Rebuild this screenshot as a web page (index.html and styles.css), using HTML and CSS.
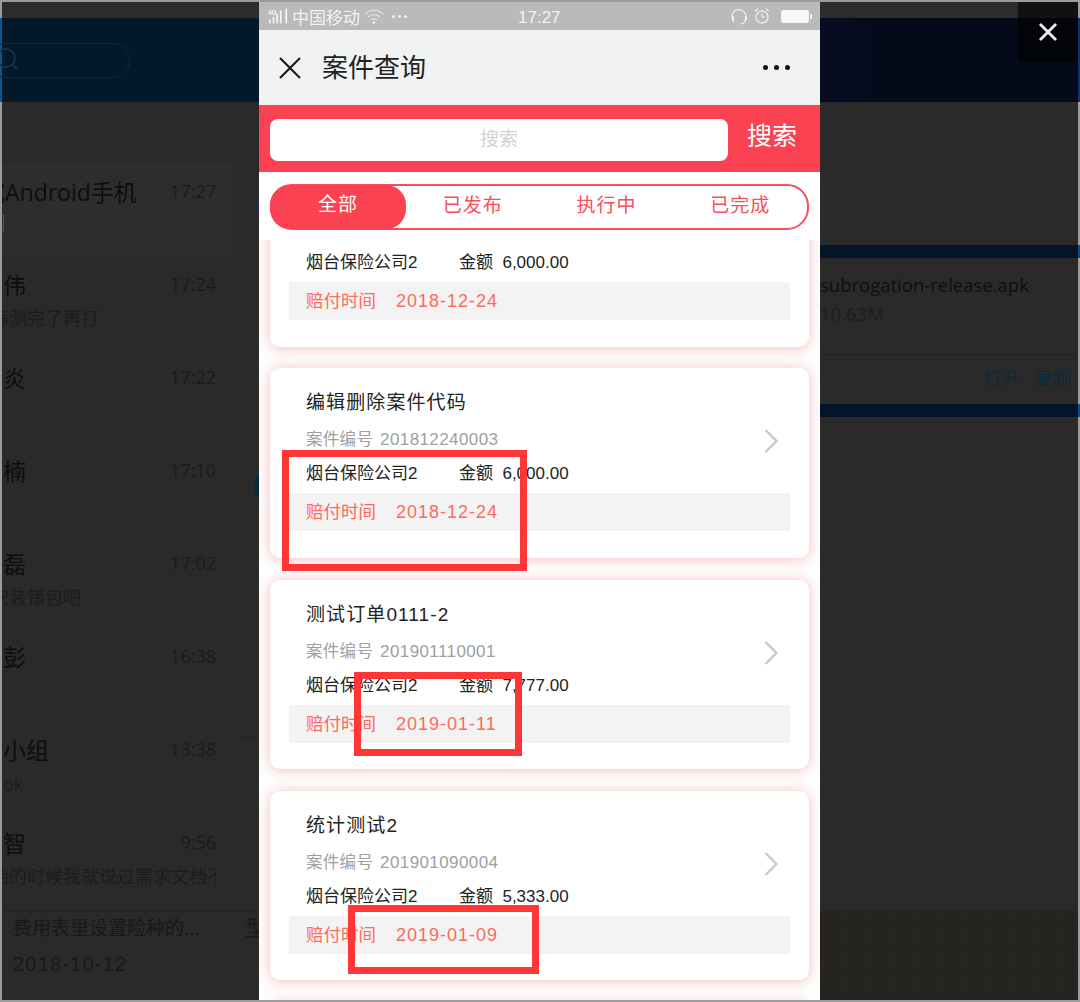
FILE: index.html
```html
<!DOCTYPE html>
<html lang="zh-CN">
<head>
    <meta charset="UTF-8">
    <meta name="viewport" content="width=device-width, initial-scale=1.0">
    <title>案件查询</title>
    <link rel="stylesheet" href="styles.css">
</head>
<body>
    <div class="frame">
        <!-- dimmed desktop app behind the phone -->
        <div class="top-strip"></div>
        <div class="app-header">
            <div class="app-search">
                <svg class="app-search-icon" width="22" height="26" viewBox="0 0 22 26"><circle cx="7" cy="11" r="9" fill="none" stroke="#123448" stroke-width="2"/><path d="M13 18l5 4" stroke="#123448" stroke-width="2" fill="none"/></svg>
            </div>
        </div>
        <div class="app-body">
            <div class="chat-list">
                <div class="chat-row active">
                    <div class="chat-line"><span class="chat-name chat-name-latin">试Android手机</span><span class="chat-time">17:27</span></div>
                    <div class="chat-text"><span class="file-chip"></span></div>
                </div>
                <div class="chat-row">
                    <div class="chat-line"><span class="chat-name">张伟</span><span class="chat-time">17:24</span></div>
                    <div class="chat-text">等测完了再打</div>
                </div>
                <div class="chat-row">
                    <div class="chat-line"><span class="chat-name">王炎</span><span class="chat-time">17:22</span></div>
                    <div class="chat-text"></div>
                </div>
                <div class="chat-row">
                    <div class="chat-line"><span class="chat-name">李楠</span><span class="chat-time">17:10</span></div>
                    <div class="chat-text"></div>
                </div>
                <div class="chat-row">
                    <div class="chat-line"><span class="chat-name">宋磊</span><span class="chat-time">17:02</span></div>
                    <div class="chat-text">安装错包吧</div>
                </div>
                <div class="chat-row">
                    <div class="chat-line"><span class="chat-name">陈彭</span><span class="chat-time">16:38</span></div>
                    <div class="chat-text"></div>
                </div>
                <div class="chat-row">
                    <div class="chat-line"><span class="chat-name">试小组</span><span class="chat-time">13:38</span></div>
                    <div class="chat-text chat-text-flat">ok</div>
                </div>
                <div class="chat-row">
                    <div class="chat-line"><span class="chat-name">陈智</span><span class="chat-time">9:56</span></div>
                    <div class="chat-text chat-text-cut">始的时候我就说过需求文档不</div>
                </div>
            </div>
            <div class="file-panel">
                <div class="blue-bar"></div>
                <div class="file-info">
                    <div class="file-name">subrogation-release.apk</div>
                    <div class="file-size">10.63M</div>
                </div>
                <div class="file-actions"><span>打开</span><span>复制</span></div>
                <div class="blue-bar"></div>
            </div>
        </div>
        <div class="app-footer">
            <div class="footer-left">
                <div class="footer-col">
                    <div class="footer-title">费用表里设置险种的...</div>
                    <div class="footer-date">2018-10-12</div>
                </div>
                <div class="footer-cut">型</div>
            </div>
            <div class="footer-right"></div>
        </div>
        <span class="app-avatar"></span>
        <span class="app-line"></span>

        <button class="close-btn">
            <svg width="20" height="20" viewBox="0 0 20 20"><path d="M2 2l16 16M18 2L2 18" stroke="#e8e8e8" stroke-width="3" fill="none"/></svg>
        </button>

        <!-- phone screen -->
        <div class="phone">
            <div class="status-bar">
                <div class="status-left">
                    <svg width="21" height="17" viewBox="0 0 23 17"><text x="0" y="7" class="net-label">4G</text><g fill="#f4f4f4"><rect x="1" y="12" width="2" height="4"/><rect x="5" y="9" width="2" height="7"/><rect x="9" y="6" width="2" height="10"/><rect x="13" y="2" width="2" height="14"/><rect x="19" y="0" width="2" height="16"/></g></svg>
                    <span class="carrier">中国移动</span>
                    <svg width="20" height="15" viewBox="0 0 20 15"><g fill="none" stroke="#e6e6e6" stroke-width="1.2"><path d="M1 5c5-5 13-5 18 0"/><path d="M4 8c3.500-3 8.500-3 12 0"/><path d="M7 11c2-1.500 4-1.500 6 0"/></g><circle cx="10" cy="13.500" r="1.300" fill="#f4f4f4"/></svg>
                    <span class="status-dots"><i></i><i></i><i></i></span>
                </div>
                <div class="status-time">17:27</div>
                <div class="status-right">
                    <svg width="17" height="17" viewBox="0 0 17 17"><path d="M3 13.500A7 7 0 1 1 14.500 11" fill="none" stroke="#f2f2f2" stroke-width="1.200"/><path d="M14.500 11c0 3-2 4.800-5 4.800" fill="none" stroke="#f2f2f2" stroke-width="1.200"/><rect x="1" y="8" width="2" height="5" rx="1" fill="#f2f2f2"/><rect x="14" y="8" width="2" height="4" rx="1" fill="#f2f2f2"/></svg>
                    <svg width="16" height="16" viewBox="0 0 16 16"><circle cx="8" cy="9" r="6" fill="none" stroke="#f2f2f2" stroke-width="1.200"/><path d="M8 5.500V9h3M1 3l3-2M15 3l-3-2" fill="none" stroke="#f2f2f2" stroke-width="1.200"/></svg>
                    <span class="battery"></span>
                </div>
            </div>
            <div class="nav-bar">
                <div class="nav-left">
                    <svg width="22" height="22" viewBox="0 0 22 22"><path d="M1 1l20 20M21 1L1 21" stroke="#1c1c1c" stroke-width="2.200" fill="none"/></svg>
                    <span class="nav-title">案件查询</span>
                </div>
                <span class="nav-more"><i></i><i></i><i></i></span>
            </div>
            <div class="search-bar">
                <div class="search-input">搜索</div>
                <div class="search-btn">搜索</div>
            </div>
            <div class="tabs-wrap">
                <div class="tabs">
                    <div class="tab on">全部</div>
                    <div class="tab">已发布</div>
                    <div class="tab">执行中</div>
                    <div class="tab">已完成</div>
                </div>
            </div>
            <div class="case-list">
                <div class="card">
                    <div class="card-top">
                        <div>
                            <div class="case-title">编辑删除案件代码</div>
                            <div class="case-no">案件编号 <span class="case-num">201812240002</span></div>
                        </div>
                    </div>
                    <div class="case-info"><span class="company">烟台保险公司2</span><span>金额&nbsp; 6,000.00</span></div>
                    <div class="case-date"><span class="date-label">赔付时间</span><span class="date-val">2018-12-24</span></div>
                </div>
                <div class="card">
                    <div class="card-top">
                        <div>
                            <div class="case-title">编辑删除案件代码</div>
                            <div class="case-no">案件编号 <span class="case-num">201812240003</span></div>
                        </div>
                        <svg class="chevron" width="15" height="24" viewBox="0 0 15 24"><path d="M1.500 1l11 11-11 11" fill="none" stroke="#c8c8c8" stroke-width="2.400"/></svg>
                    </div>
                    <div class="case-info"><span class="company">烟台保险公司2</span><span>金额&nbsp; 6,000.00</span></div>
                    <div class="case-date"><span class="date-label">赔付时间</span><span class="date-val">2018-12-24</span></div>
                    <div class="mark mark-a"></div>
                </div>
                <div class="card">
                    <div class="card-top">
                        <div>
                            <div class="case-title">测试订单0111-2</div>
                            <div class="case-no">案件编号 <span class="case-num">201901110001</span></div>
                        </div>
                        <svg class="chevron" width="15" height="24" viewBox="0 0 15 24"><path d="M1.500 1l11 11-11 11" fill="none" stroke="#c8c8c8" stroke-width="2.400"/></svg>
                    </div>
                    <div class="case-info"><span class="company">烟台保险公司2</span><span>金额&nbsp; 7,777.00</span></div>
                    <div class="case-date"><span class="date-label">赔付时间</span><span class="date-val">2019-01-11</span></div>
                    <div class="mark mark-b"></div>
                </div>
                <div class="card">
                    <div class="card-top">
                        <div>
                            <div class="case-title">统计测试2</div>
                            <div class="case-no">案件编号 <span class="case-num">201901090004</span></div>
                        </div>
                        <svg class="chevron" width="15" height="24" viewBox="0 0 15 24"><path d="M1.500 1l11 11-11 11" fill="none" stroke="#c8c8c8" stroke-width="2.400"/></svg>
                    </div>
                    <div class="case-info"><span class="company">烟台保险公司2</span><span>金额&nbsp; 5,333.00</span></div>
                    <div class="case-date"><span class="date-label">赔付时间</span><span class="date-val">2019-01-09</span></div>
                    <div class="mark mark-c"></div>
                </div>
                <div class="card"></div>
            </div>
        </div>
    </div>
</body>
</html>
```

FILE: styles.css
```css
* {
    box-sizing: border-box;
}
body {
    margin: 0;
    font-family: "Liberation Sans", "Noto Sans CJK SC", sans-serif;
}
.frame {
    position: relative;
    width: 1080px;
    height: 1002px;
    padding: 2px;
    background: #9c9c9c;
    overflow: hidden;
    display: flex;
    flex-direction: column;
}

/* background app */
.top-strip {
    height: 16px;
    background: #2c2c2c;
}
.app-header {
    height: 84px;
    margin: 0 -2px;
    border-left: 2px solid #0a5590;
    border-right: 2px solid #14306e;
    background: linear-gradient(90deg, #03192a 0, #031826 55%, #070c22 76%, #050a1a 82%, #050a1a 100%);
    padding-top: 25px;
}
.app-search {
    width: 142px;
    height: 35px;
    margin-left: -14px;
    border: 1px solid #0c2a3e;
    border-radius: 18px;
    padding: 3px 0 0 10px;
}
.app-search-icon {
    display: block;
}
.app-body {
    height: 809px;
    background: #2a2a2a;
    display: flex;
    justify-content: space-between;
}
.chat-list {
    width: 231px;
    padding-top: 61px;
    overflow: hidden;
}
.chat-row {
    height: 93px;
    padding: 13px 17px 0 0;
}
.chat-row.active {
    background: #2d2d2d;
}
.chat-line {
    display: flex;
    justify-content: space-between;
    align-items: flex-start;
    height: 36px;
}
.chat-name {
    margin-left: -22px;
    font-family: "Open Sans", "Noto Sans CJK SC", sans-serif;
    font-size: 23px;
    line-height: 32px;
    color: #0d0d0d;
    white-space: nowrap;
}
.chat-name-latin {
    margin-left: -20px;
}
.chat-time {
    font-family: "Open Sans", sans-serif;
    font-size: 18px;
    line-height: 30px;
    color: #1b1b1b;
}
.chat-text {
    height: 26px;
    margin-left: -11px;
    font-size: 18px;
    line-height: 28px;
    color: #1c1c1c;
    white-space: nowrap;
}
.chat-text-flat {
    margin-left: 1px;
    font-family: "Open Sans", sans-serif;
}
.chat-text-cut {
    width: 225px;
    overflow: hidden;
}
.file-chip {
    display: block;
    width: 18px;
    height: 17px;
    margin: 3px 0 0 -5px;
    border: 1px solid #555;
}
.file-panel {
    width: 258px;
    padding-top: 143px;
}
.blue-bar {
    height: 13px;
    margin-right: -2px;
    border-right: 2px solid #0a4a86;
    background: #04152a;
}
.file-info {
    height: 97px;
    padding-top: 13px;
    border-bottom: 1px solid #232323;
}
.file-name {
    font-family: "Open Sans", sans-serif;
    font-size: 18.500px;
    line-height: 28px;
    color: #0f0f0f;
}
.file-size {
    font-family: "Open Sans", sans-serif;
    font-size: 18.500px;
    line-height: 30px;
    color: #1d1d1d;
}
.file-actions {
    height: 49px;
    padding: 11px 7px 0 0;
    display: flex;
    justify-content: flex-end;
    gap: 15px;
    font-size: 18px;
    line-height: 26px;
    color: #0a2a3a;
}
.app-footer {
    flex: 1;
    display: flex;
    border-top: 1px solid #232323;
}
.footer-left {
    width: 257px;
    padding-left: 11px;
    background: #2a2a2a;
    display: flex;
    justify-content: space-between;
    color: #181818;
    overflow: hidden;
}
.footer-col {
    padding-top: 3px;
}
.footer-title {
    font-size: 19px;
    line-height: 28px;
}
.footer-date {
    margin-top: 7px;
    font-size: 20px;
    letter-spacing: 1.200px;
    line-height: 28px;
}
.footer-cut {
    width: 14px;
    font-size: 22px;
    line-height: 28px;
    padding-top: 3px;
    color: #1a1a1a;
}
.footer-right {
    flex: 1;
    background-color: #262522;
    background-image: radial-gradient(#222120 1px, transparent 1px);
    background-size: 6px 6px;
}
.app-avatar {
    position: absolute;
    left: 254px;
    top: 468px;
    width: 36px;
    height: 36px;
    border-radius: 50%;
    background: #052a44;
}
.app-line {
    position: absolute;
    left: 238px;
    top: 736px;
    width: 22px;
    height: 1px;
    background: #242424;
}
.close-btn {
    position: absolute;
    right: 2px;
    top: 2px;
    width: 60px;
    height: 60px;
    border: none;
    padding: 0;
    background: rgba(0, 0, 0, 0.6);
    display: flex;
    justify-content: center;
    align-items: center;
}

/* phone */
.phone {
    position: absolute;
    left: 259px;
    top: 2px;
    width: 561px;
    height: 998px;
    background: #fff;
    display: flex;
    flex-direction: column;
    overflow: hidden;
}
.status-bar {
    height: 28px;
    flex-shrink: 0;
    background: #bababa;
    padding: 0 9px;
    display: flex;
    justify-content: space-between;
    align-items: center;
    position: relative;
}
.status-left {
    display: flex;
    align-items: center;
    gap: 3px;
    padding-top: 1px;
}
.net-label {
    font-size: 7px;
    font-weight: bold;
    fill: #f4f4f4;
}
.carrier {
    font-size: 17px;
    color: #f2f2f2;
    margin-right: 1px;
}
.status-dots {
    display: flex;
    gap: 3px;
    margin-left: 5px;
}
.status-dots i {
    width: 3px;
    height: 3px;
    border-radius: 50%;
    background: #f2f2f2;
}
.status-time {
    position: absolute;
    left: 259px;
    top: 5px;
    font-size: 17px;
    line-height: 22px;
    color: #f2f2f2;
}
.status-right {
    display: flex;
    align-items: center;
    gap: 6px;
}
.battery {
    position: relative;
    width: 28px;
    height: 13px;
    margin: 0 2px 0 5px;
    border: 1px solid #f2f2f2;
    border-radius: 2px;
    background: #f8f8f8;
}
.battery::after {
    content: "";
    position: absolute;
    right: -4px;
    top: 3px;
    width: 2px;
    height: 5px;
    background: #f2f2f2;
}
.nav-bar {
    height: 75px;
    flex-shrink: 0;
    background: #f1f3f2;
    padding: 0 30px 0 20px;
    display: flex;
    justify-content: space-between;
    align-items: center;
}
.nav-left {
    display: flex;
    align-items: center;
    gap: 21px;
}
.nav-title {
    font-size: 26px;
    line-height: 36px;
    color: #222;
}
.nav-more {
    display: flex;
    gap: 6px;
}
.nav-more i {
    width: 5px;
    height: 5px;
    border-radius: 50%;
    background: #111;
}
.search-bar {
    height: 67px;
    flex-shrink: 0;
    background: #fb4252;
    padding: 14px 23px 0 11px;
    display: flex;
    justify-content: space-between;
}
.search-input {
    width: 458px;
    height: 42px;
    border-radius: 8px;
    background: #fff;
    text-align: center;
    font-size: 19px;
    line-height: 42px;
    color: #d2d2d2;
}
.search-btn {
    font-size: 25px;
    line-height: 34px;
    color: #fff;
}
.tabs-wrap {
    height: 68px;
    flex-shrink: 0;
    padding: 12px 11px 0;
    background: #fff;
}
.tabs {
    width: 539px;
    height: 46px;
    border: 2px solid #fb4d5c;
    border-radius: 22px;
    display: flex;
}
.tab {
    flex: 1;
    text-align: center;
    font-size: 19px;
    letter-spacing: 1px;
    line-height: 40px;
    color: #fb4d5c;
}
.tab.on {
    flex: none;
    width: 136px;
    height: 44px;
    margin: -1px 0 -1px -2px;
    border-radius: 20px;
    background: #fb4252;
    color: #fff;
}
.case-list {
    flex: 1;
    min-height: 0;
    padding: 0 11px;
    display: flex;
    flex-direction: column;
    gap: 21.800px;
    overflow: hidden;
}
.card {
    position: relative;
    flex-shrink: 0;
    height: 189.500px;
    padding: 21px 19px 0;
    border-radius: 10px;
    background: #fff;
    box-shadow: 0 1px 14px rgba(240, 120, 120, 0.5);
}
.card:first-child {
    margin-top: -83px;
}
.card-top {
    height: 70px;
    padding: 0 11px 0 17px;
    display: flex;
    justify-content: space-between;
    align-items: flex-start;
}
.chevron {
    margin-top: 40px;
}
.case-title {
    font-size: 19px;
    line-height: 28px;
    letter-spacing: 1.100px;
    color: #222;
}
.case-no {
    margin-top: 10px;
    font-size: 16.500px;
    line-height: 24px;
    letter-spacing: 0.300px;
    color: #a0a0a0;
    white-space: nowrap;
}
.case-num {
    margin-left: 2px;
    font-size: 17px;
    letter-spacing: 0.400px;
}
.case-info {
    height: 34px;
    padding-left: 17px;
    font-size: 17px;
    line-height: 29px;
    color: #222;
    display: flex;
}
.company {
    width: 153px;
}
.case-date {
    height: 38px;
    padding-left: 17px;
    background: #f3f3f3;
    font-size: 17.500px;
    line-height: 38px;
    color: #ff6a5c;
    display: flex;
}
.date-label {
    width: 90px;
}
.date-val {
    font-size: 18px;
    letter-spacing: 1px;
}

/* red annotation boxes over the screenshot */
.mark {
    position: absolute;
    border: 7px solid #ff3636;
}
.mark-a {
    left: 12px;
    top: 82px;
    width: 245px;
    height: 121px;
}
.mark-b {
    left: 84px;
    top: 92px;
    width: 168px;
    height: 84px;
}
.mark-c {
    left: 78px;
    top: 114px;
    width: 191px;
    height: 69px;
}
```
